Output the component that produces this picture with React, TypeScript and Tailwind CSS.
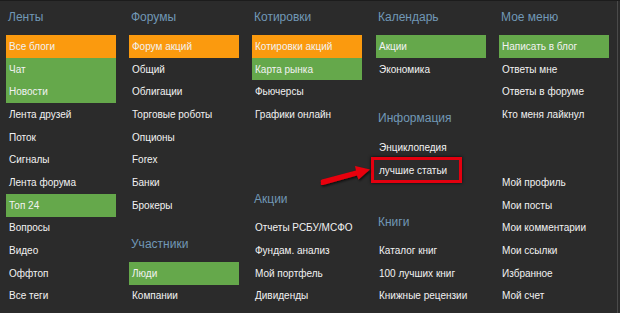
type Item = { label: string; tone?: 'orange' | 'green' };

const font = { fontFamily: '"Liberation Sans", Arial, sans-serif' };

function Row({ item }: { item: Item }) {
  const bg =
    item.tone === 'orange'
      ? 'bg-[#fb9a0e]'
      : item.tone === 'green'
        ? 'bg-[#65a84b]'
        : '';
  return (
    <div className={`h-[22.7px] w-[110px] flex items-center pl-[3px] text-[10px] text-[#f2f2f2] ${bg}`}>
      {item.label}
    </div>
  );
}

function Header({ title, h, pt }: { title: string; h: string; pt: string }) {
  return (
    <div className={`${h} ${pt} pl-[2px] text-[12px] leading-[14px] text-[#7198b6]`}>{title}</div>
  );
}

function Rows({ items }: { items: Item[] }) {
  return (
    <>
      {items.map((it) => (
        <Row key={it.label} item={it} />
      ))}
    </>
  );
}

export default function App() {
  return (
    <div
      className="relative w-[620px] h-[313px] bg-[#2b2b2b] border-t border-[#1c1c1c] overflow-hidden"
      style={font}
    >
      <div className="absolute right-[2px] top-0 h-full w-px bg-[#4a4a4a]" />
      <div className="flex pl-[6px]">
        <div className="w-[123px] flex flex-col">
          <Header title="Ленты" h="h-[34px]" pt="pt-[9px]" />
          <Rows
            items={[
              { label: 'Все блоги', tone: 'orange' },
              { label: 'Чат', tone: 'green' },
              { label: 'Новости', tone: 'green' },
              { label: 'Лента друзей' },
              { label: 'Поток' },
              { label: 'Сигналы' },
              { label: 'Лента форума' },
              { label: 'Топ 24', tone: 'green' },
              { label: 'Вопросы' },
              { label: 'Видео' },
              { label: 'Оффтоп' },
              { label: 'Все теги' },
            ]}
          />
        </div>

        <div className="w-[123px] flex flex-col">
          <Header title="Форумы" h="h-[34px]" pt="pt-[9px]" />
          <Rows
            items={[
              { label: 'Форум акций', tone: 'orange' },
              { label: 'Общий' },
              { label: 'Облигации' },
              { label: 'Торговые роботы' },
              { label: 'Опционы' },
              { label: 'Forex' },
              { label: 'Банки' },
              { label: 'Брокеры' },
            ]}
          />
          <Header title="Участники" h="h-[45.4px]" pt="pt-[20px]" />
          <Rows items={[{ label: 'Люди', tone: 'green' }, { label: 'Компании' }]} />
        </div>

        <div className="w-[124px] flex flex-col">
          <Header title="Котировки" h="h-[34px]" pt="pt-[9px]" />
          <Rows
            items={[
              { label: 'Котировки акций', tone: 'orange' },
              { label: 'Карта рынка', tone: 'green' },
              { label: 'Фьючерсы' },
              { label: 'Графики онлайн' },
            ]}
          />
          <Header title="Акции" h="h-[90.8px]" pt="pt-[66px]" />
          <Rows
            items={[
              { label: 'Отчеты РСБУ/МСФО' },
              { label: 'Фундам. анализ' },
              { label: 'Мой портфель' },
              { label: 'Дивиденды' },
            ]}
          />
        </div>

        <div className="w-[123px] flex flex-col">
          <Header title="Календарь" h="h-[34px]" pt="pt-[9px]" />
          <Rows items={[{ label: 'Акции', tone: 'green' }, { label: 'Экономика' }]} />
          <Header title="Информация" h="h-[56.2px]" pt="pt-[31px]" />
          <Row item={{ label: 'Энциклопедия' }} />
          <div className="relative">
            <div className="absolute -left-[5px] -top-[2px] w-[91px] h-[26px] border-[3px] border-[#e3000f] shadow-[0_0_3px_rgba(0,0,0,0.8)]" />
            <Row item={{ label: 'лучшие статьи' }} />
          </div>
          <Header title="Книги" h="h-[57.2px]" pt="pt-[33px]" />
          <Rows
            items={[
              { label: 'Каталог книг' },
              { label: '100 лучших книг' },
              { label: 'Книжные рецензии' },
            ]}
          />
        </div>

        <div className="w-[118px] flex flex-col">
          <Header title="Мое меню" h="h-[34px]" pt="pt-[9px]" />
          <Rows
            items={[
              { label: 'Написать в блог', tone: 'green' },
              { label: 'Ответы мне' },
              { label: 'Ответы в форуме' },
              { label: 'Кто меня лайкнул' },
            ]}
          />
          <div className="h-[45.4px]" />
          <Rows
            items={[
              { label: 'Мой профиль' },
              { label: 'Мои посты' },
              { label: 'Мои комментарии' },
              { label: 'Мои ссылки' },
              { label: 'Избранное' },
              { label: 'Мой счет' },
            ]}
          />
        </div>
      </div>

      <svg
        className="absolute left-[316px] top-[160px]"
        width="60"
        height="30"
        viewBox="0 0 60 30"
      >
        <defs>
          <filter id="sh" x="-20%" y="-40%" width="140%" height="180%">
            <feDropShadow dx="1" dy="1.5" stdDeviation="1" floodColor="#000" floodOpacity="0.7" />
          </filter>
        </defs>
        <path
          d="M5 21.5 Q4 24.5 7 24 L41 14.5 L42.5 18.5 L54 8.5 L39 5 L40 9.5 L6 18.5 Q4 19 5 21.5 Z"
          fill="#e8000c"
          filter="url(#sh)"
        />
      </svg>
    </div>
  );
}
